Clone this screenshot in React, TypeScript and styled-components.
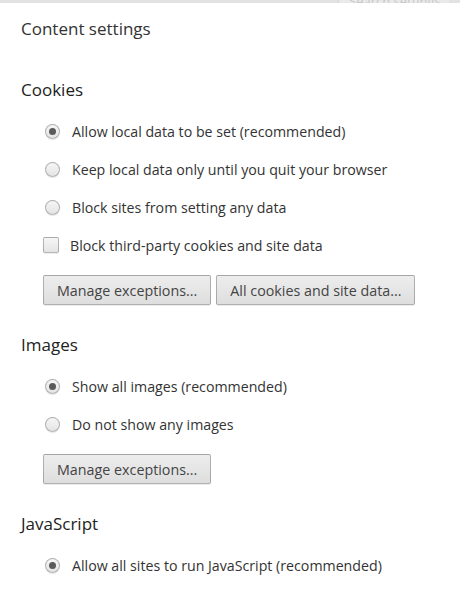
import React, {FC} from 'react';
import styled, {createGlobalStyle} from 'styled-components';

const GlobalStyle = createGlobalStyle`
  html, body {
    margin: 0;
    padding: 0;
    background: #fff;
  }
  body {
    font-family: "Open Sans", "Noto Sans", sans-serif;
    color: #303030;
  }
`

interface OptionProps {
    label: string;
    checked?: boolean;
}

const RadioOption: FC<OptionProps> = ({label, checked}) => (
    <Row>
        <Radio $checked={!!checked}/>
        <Label>{label}</Label>
    </Row>
);

const CheckOption: FC<OptionProps> = ({label}) => (
    <Row>
        <Checkbox/>
        <CheckLabel>{label}</CheckLabel>
    </Row>
);

const App: FC = () => {
    return (
        <>
            <GlobalStyle/>
            <TopStrip>
                <SearchBox>Search settings</SearchBox>
            </TopStrip>
            <Dialog>
                <Title>Content settings</Title>
                <Section>
                    <Heading>Cookies</Heading>
                    <Options>
                        <RadioOption checked label="Allow local data to be set (recommended)"/>
                        <RadioOption label="Keep local data only until you quit your browser"/>
                        <RadioOption label="Block sites from setting any data"/>
                        <CheckOption label="Block third-party cookies and site data"/>
                    </Options>
                    <Buttons>
                        <Button>Manage exceptions...</Button>
                        <Button>All cookies and site data...</Button>
                    </Buttons>
                </Section>
                <Section>
                    <Heading>Images</Heading>
                    <Options>
                        <RadioOption checked label="Show all images (recommended)"/>
                        <RadioOption label="Do not show any images"/>
                    </Options>
                    <Buttons>
                        <Button>Manage exceptions...</Button>
                    </Buttons>
                </Section>
                <Section>
                    <Heading>JavaScript</Heading>
                    <Options>
                        <RadioOption checked label="Allow all sites to run JavaScript (recommended)"/>
                    </Options>
                </Section>
            </Dialog>
        </>
    );
};

export default App;


const TopStrip = styled.div`
  height: 3px;
  background: #e2e2e2;
  display: flex;
  justify-content: flex-end;
  overflow: hidden;
`
const SearchBox = styled.div`
  width: 100px;
  margin-right: 11px;
  padding-left: 10px;
  border-left: 1px solid #d4d4d4;
  background: #eaeaea;
  color: #c8c8c8;
  font-size: 13px;
  line-height: 3px;
  white-space: nowrap;
`
const Dialog = styled.div`
  padding: 16px 0 0 21px;
`
const Title = styled.h1`
  margin: 0 0 41px;
  font-size: 17px;
  font-weight: normal;
  line-height: 20px;
  color: #333;
`
const Section = styled.section`
  margin-bottom: 30px;
  &:last-child {
    margin-bottom: 0;
  }
`
const Heading = styled.h2`
  margin: 0 0 21px;
  font-size: 17px;
  font-weight: normal;
  line-height: 20px;
  color: #222;
`
const Options = styled.div`
  display: flex;
  flex-direction: column;
  gap: 18px;
  padding-left: 22px;
`
const Row = styled.div`
  display: flex;
  align-items: center;
  height: 20px;
`
const Radio = styled.span<{ $checked: boolean }>`
  position: relative;
  box-sizing: border-box;
  width: 15px;
  height: 15px;
  margin-left: 2px;
  border-radius: 50%;
  border: 1px solid rgba(0, 0, 0, 0.25);
  background: linear-gradient(#f6f6f6, #e4e4e4);
  box-shadow: 0 1px 1px rgba(0, 0, 0, 0.1);
  flex-shrink: 0;
  &::after {
    content: '';
    display: ${p => p.$checked ? 'block' : 'none'};
    position: absolute;
    width: 7px;
    height: 7px;
    left: 3px;
    top: 3px;
    border-radius: 50%;
    background: #5a5a5a;
  }
`
const Checkbox = styled.span`
  box-sizing: border-box;
  width: 16px;
  height: 16px;
  border-radius: 2px;
  border: 1px solid rgba(0, 0, 0, 0.25);
  background: linear-gradient(#f6f6f6, #e4e4e4);
  box-shadow: 0 1px 1px rgba(0, 0, 0, 0.08);
  flex-shrink: 0;
`
const Label = styled.span`
  margin-left: 12px;
  font-size: 14.2px;
  color: #333;
  white-space: nowrap;
`
const CheckLabel = styled(Label)`
  margin-left: 11px;
`
const Buttons = styled.div`
  display: flex;
  gap: 5px;
  margin: 20px 0 0 22px;
`
const Button = styled.button`
  height: 30px;
  padding: 0 13px;
  border: 1px solid rgba(0, 0, 0, 0.25);
  border-radius: 2px;
  background: linear-gradient(#ededed, #dedede);
  box-shadow: 0 1px 0 rgba(0, 0, 0, 0.08);
  font-family: "Open Sans", "Noto Sans", sans-serif;
  font-size: 14.3px;
  color: #444;
  cursor: pointer;
`
